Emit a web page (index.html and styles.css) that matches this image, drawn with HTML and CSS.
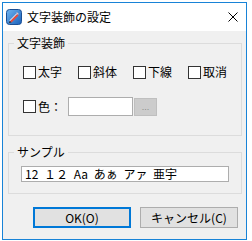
FILE: index.html
```html
<!DOCTYPE html>
<html>
<head>
  <title>文字装飾の設定</title>
  <link rel="stylesheet" href="styles.css">
</head>
<body>
  <div class="window">
    <div class="titlebar">
      <svg class="app-icon" width="16" height="16" viewBox="0 0 16 16">
        <defs>
          <linearGradient id="iconBg" x1="0" y1="0" x2="1" y2="1">
            <stop offset="0" stop-color="#6fb6f2"/>
            <stop offset="1" stop-color="#1a5fb8"/>
          </linearGradient>
        </defs>
        <rect x="0.5" y="0.5" width="15" height="15" rx="3" fill="url(#iconBg)" stroke="#1b4f94"/>
        <path d="M4 12 L11 5 L12.5 6.5 L5.5 13.5 Z" fill="#e84a3c"/>
        <path d="M3.5 11.5 L10.5 4.5 L11 5 L4 12 Z" fill="#fff"/>
        <path d="M11 3.2 L12.8 5 L12 5.8 L10.2 4 Z" fill="#f6c2bd"/>
        <path d="M3 13 L4 12 L5.5 13.5 L3 14 Z" fill="#333"/>
      </svg>
      <span class="title">文字装飾の設定</span>
      <svg class="close" width="10" height="10" viewBox="0 0 10 10">
        <path d="M0.5 0.5 L9.5 9.5 M9.5 0.5 L0.5 9.5" stroke="#000" stroke-width="1"/>
      </svg>
    </div>

    <div class="client">
      <fieldset class="group group-style">
        <legend>文字装飾</legend>
        <div class="check-row">
          <label class="check"><span class="box"></span>太字</label>
          <label class="check"><span class="box"></span>斜体</label>
          <label class="check"><span class="box"></span>下線</label>
          <label class="check"><span class="box"></span>取消</label>
        </div>
        <div class="color-row">
          <label class="check"><span class="box"></span>色：</label>
          <span class="color-field"></span>
          <button class="pick" disabled>...</button>
        </div>
      </fieldset>

      <fieldset class="group group-sample">
        <legend>サンプル</legend>
        <div class="sample">12 １２ Aa あぁ アァ 亜宇</div>
      </fieldset>

      <div class="buttons">
        <button class="btn btn-default">OK(O)</button>
        <button class="btn">キャンセル(C)</button>
      </div>
    </div>
  </div>
</body>
</html>
```

FILE: styles.css
```css
body {
  margin: 0;
  background-color: #fff;
  font-family: "Noto Sans CJK JP", sans-serif;
  font-size: 12px;
  color: #000;
}

.window {
  margin: 2px 0 0 2px;
  width: 245px;
  height: 238px;
  box-sizing: border-box;
  border: 1px solid #1883d7;
  display: flex;
  flex-direction: column;
}

.titlebar {
  height: 28px;
  background-color: #fff;
  display: flex;
  align-items: center;
  padding-left: 3px;
}

.app-icon {
  display: block;
}

.title {
  margin-left: 5px;
  line-height: 16px;
}

.close {
  display: block;
  margin-left: auto;
  margin-right: 8px;
}

.client {
  flex: 1;
  background-color: #f0f0f0;
  padding: 5px 4px 0 5px;
}

.group {
  margin: 0;
  padding: 0;
  border: 1px solid #dcdcdc;
}

.group legend {
  margin-left: 5px;
  padding: 0 3px;
  line-height: 14px;
}

.group-style {
  height: 100px;
  box-sizing: border-box;
}

.check-row {
  display: flex;
  gap: 16px;
  margin: 15px 0 0 14px;
}

.check {
  display: flex;
  align-items: center;
  line-height: 14px;
}

.box {
  width: 13px;
  height: 13px;
  box-sizing: border-box;
  border: 1px solid #333;
  background-color: #fff;
  margin-right: 2px;
}

.color-row {
  display: flex;
  align-items: center;
  margin: 18px 0 0 14px;
}

.color-field {
  width: 65px;
  height: 19px;
  box-sizing: border-box;
  border: 1px solid #adadad;
  background-color: #fff;
  margin-left: 6px;
}

.pick {
  width: 23px;
  height: 18px;
  margin-left: 1px;
  padding: 0;
  border: 1px solid #bfbfbf;
  background-color: #cccccc;
  color: #8a8a8a;
  font-size: 9px;
  line-height: 14px;
}

.group-sample {
  margin-top: 9px;
  height: 49px;
  box-sizing: border-box;
}

.sample {
  margin: 7px 0 0 12px;
  width: 208px;
  height: 16px;
  box-sizing: border-box;
  border: 1px solid #adadad;
  background-color: #fff;
  padding-left: 3px;
  line-height: 14px;
  word-spacing: 3px;
  white-space: nowrap;
}

.buttons {
  display: flex;
  gap: 9px;
  margin: 13px 0 0 25px;
}

.btn {
  width: 98px;
  height: 21px;
  padding: 0;
  border: 1px solid #adadad;
  background-color: #e1e1e1;
  font-family: "Noto Sans CJK JP", sans-serif;
  font-size: 12px;
  line-height: 17px;
  color: #000;
}

.btn-default {
  border: 2px solid #0078d7;
}
```
